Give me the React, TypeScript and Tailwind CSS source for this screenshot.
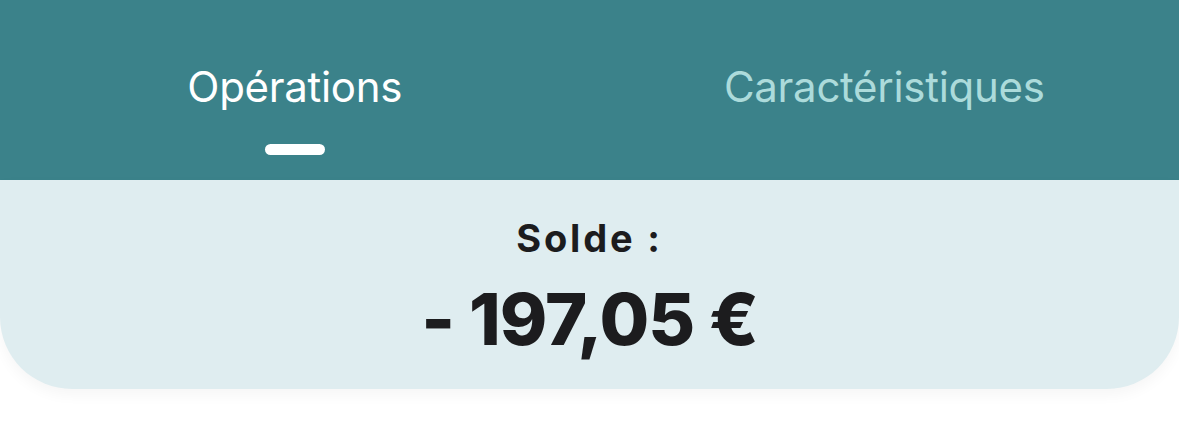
import React from "react";

const App = () => {
    return (
        <div className="w-[1179px] h-[425px] bg-white font-['Inter',sans-serif] overflow-hidden">
            <div className="bg-[#3b828a] h-[180px] grid grid-cols-2">
                <div className="flex flex-col items-center pt-[62px]">
                    <span className="text-[42px] leading-[50px] text-white tracking-[-0.3px]">Opérations</span>
                    <div className="mt-[32px] w-[60px] h-[11px] rounded-full bg-white" />
                </div>
                <div className="flex flex-col items-center pt-[62px]">
                    <span className="text-[42px] leading-[50px] text-[#acdbdb] tracking-[-0.3px]">Caractéristiques</span>
                </div>
            </div>
            <div className="bg-[#dfedf0] h-[209px] rounded-b-[72px] shadow-[0_6px_14px_rgba(0,0,0,0.04)] flex flex-col items-center pt-[34px]">
                <span className="text-[38px] leading-[48px] font-bold text-[#1c1c1e] tracking-[2.8px]">Solde&nbsp;:</span>
                <span className="mt-[17px] text-[72px] leading-[80px] font-extrabold text-[#1c1c1e] tracking-[-1px]">- 197,05 €</span>
            </div>
        </div>
    );
};

export default App;
